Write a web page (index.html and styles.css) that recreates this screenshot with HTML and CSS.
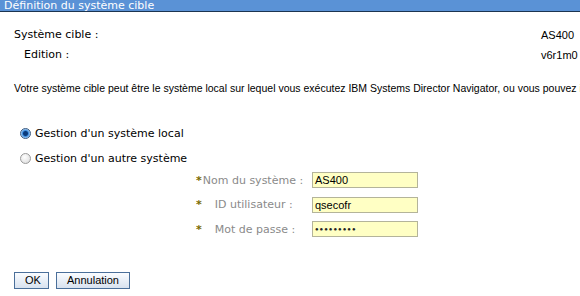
FILE: index.html
```html
<!DOCTYPE html>
<html lang="fr">
<head>
  <meta charset="UTF-8">
  <title>Définition du système cible</title>
  <link rel="stylesheet" href="styles.css">
</head>
<body>
  <!-- Barre de titre -->
  <div class="titlebar">Définition du système cible</div>

  <!-- Infos du système cible -->
  <div class="info">
    <div class="info-row">
      <span class="info-label">Système cible :</span>
      <span class="info-value">AS400</span>
    </div>
    <div class="info-row sub">
      <span class="info-label">Edition :</span>
      <span class="info-value">v6r1m0</span>
    </div>
  </div>

  <p class="desc">Votre système cible peut être le système local sur lequel vous exécutez IBM Systems Director Navigator, ou vous pouvez i</p>

  <div class="choices">
    <label class="choice"><span class="radio checked"></span>Gestion d'un système local</label>
    <label class="choice"><span class="radio"></span>Gestion d'un autre système</label>
  </div>

  <div class="fields">
    <div class="field">
      <span class="label"><span class="req">*</span>Nom du système :</span>
      <span class="input">AS400</span>
    </div>
    <div class="field">
      <span class="label"><span class="req">*</span><span class="pad">ID utilisateur :</span></span>
      <span class="input">qsecofr</span>
    </div>
    <div class="field">
      <span class="label"><span class="req">*</span><span class="pad">Mot de passe :</span></span>
      <span class="input dots">●●●●●●●●●</span>
    </div>
  </div>

  <div class="buttons">
    <button class="btn ok">OK</button>
    <button class="btn">Annulation</button>
  </div>
</body>
</html>
```

FILE: styles.css
```css
body {
  margin: 0;
  background-color: #fff;
  font-family: "DejaVu Sans", Verdana, sans-serif;
  font-size: 11px;
  color: #000;
  overflow: hidden;
}
.titlebar {
  height: 11px;
  line-height: 11px;
  background-color: #5a92d6;
  border-bottom: 1px solid #1c3550;
  color: #fff;
  padding-left: 4px;
  font-size: 11px;
}
.info {
  margin-top: 15px;
}
.info-row {
  display: flex;
  height: 20px;
  line-height: 16px;
  padding-left: 14px;
}
.info-row.sub {
  padding-left: 24px;
}
.info-label {
  width: 527px;
}
.info-row.sub .info-label {
  width: 517px;
}
.info-value {
  font-family: "Liberation Sans", Arial, sans-serif;
  font-size: 11px;
}
.desc {
  margin: 14px 0 0 14px;
  white-space: nowrap;
  font-family: "Liberation Sans", Arial, sans-serif;
  font-size: 10.5px;
  line-height: 14px;
}
.choices {
  margin-top: 26px;
  padding-left: 20px;
}
.choice {
  display: flex;
  align-items: center;
  height: 25px;
  font-size: 11px;
}
.radio {
  width: 11px;
  height: 11px;
  border-radius: 50%;
  border: 1px solid #9a9a9a;
  background: radial-gradient(circle at 40% 35%, #fff, #d8d8d8);
  margin-right: 4px;
  box-sizing: border-box;
}
.radio.checked {
  border-color: #3a5a80;
  background: radial-gradient(circle, #0a3a7a 0 2px, #3b8de0 3px, #cfe4fa 5px);
}
.fields {
  margin-top: -3px;
  padding-left: 196px;
}
.field {
  display: flex;
  align-items: center;
  height: 24.5px;
}
.label {
  width: 116px;
  color: #8a8a8a;
  font-size: 11px;
}
.req {
  color: #7a6a00;
  font-weight: bold;
  margin-right: 1px;
}
.pad {
  padding-left: 12px;
}
.input {
  width: 102px;
  height: 14px;
  line-height: 14px;
  border: 1px solid #b4b49a;
  background-color: #ffffc4;
  font-family: "Liberation Sans", Arial, sans-serif;
  font-size: 11px;
  padding-left: 2px;
}
.input.dots {
  font-size: 6px;
  letter-spacing: 1px;
  color: #222;
}
.buttons {
  display: flex;
  gap: 7px;
  margin-top: 30px;
  padding-left: 14px;
}
.btn {
  height: 17px;
  padding: 0 10px;
  font-family: "Liberation Sans", Arial, sans-serif;
  font-size: 11px;
  border: 1px solid #4a6f9a;
  background: linear-gradient(#fafcff, #d8e2ef);
  color: #000;
}
.btn.ok {
  width: 35px;
}
```
